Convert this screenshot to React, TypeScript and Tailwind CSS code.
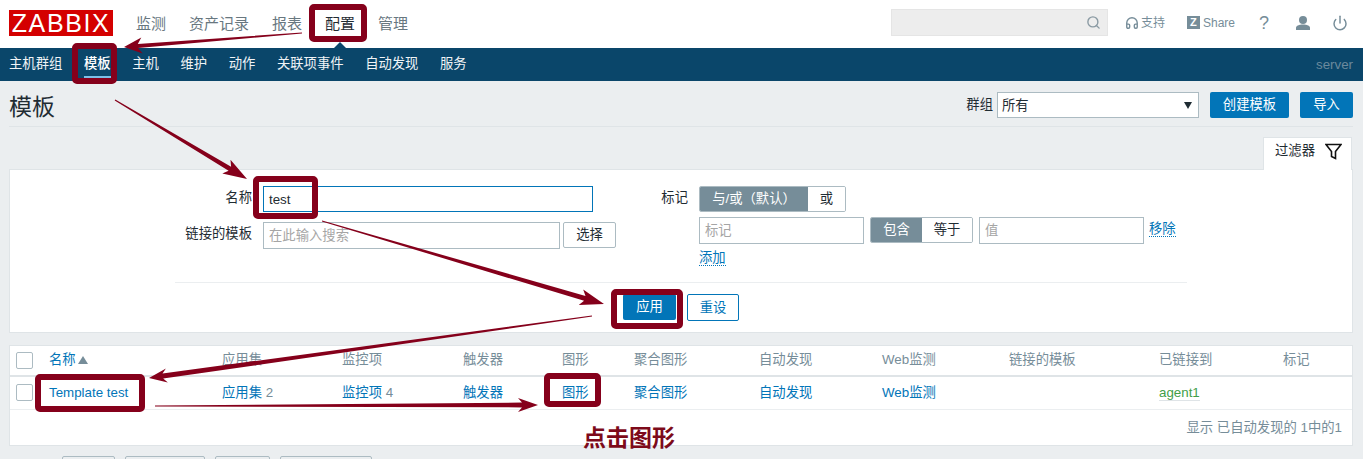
import { Search, Headphones, Power } from 'lucide-react'

const FONT = '[font-family:"Liberation_Sans","Noto_Sans_CJK_SC",sans-serif]'

const TOP_NAV = [
  { label: '监测', width: 'w-[30px]' },
  { label: '资产记录', width: 'w-[60px]' },
  { label: '报表', width: 'w-[30px]' },
  { label: '配置', width: 'w-[30px]', active: true },
  { label: '管理', width: 'w-[30px]' },
]

const SUB_NAV = ['主机群组', '模板', '主机', '维护', '动作', '关联项事件', '自动发现', '服务']

const COLUMNS = [
  { label: '应用集', width: 'w-[120px]' },
  { label: '监控项', width: 'w-[121px]' },
  { label: '触发器', width: 'w-[99px]' },
  { label: '图形', width: 'w-[72px]' },
  { label: '聚合图形', width: 'w-[125px]' },
  { label: '自动发现', width: 'w-[123px]' },
  { label: 'Web监测', width: 'w-[127px]' },
  { label: '链接的模板', width: 'w-[150px]' },
  { label: '已链接到', width: 'w-[124px]' },
  { label: '标记', width: '' },
]

const MARK = '#85001b'

// tapered arrow: thin at the tail, thick at the neck, notched head
function arrowPoints(x1: number, y1: number, x2: number, y2: number, head = 22, spread = 8, neck = 2.2) {
  const dx = x2 - x1
  const dy = y2 - y1
  const len = Math.hypot(dx, dy)
  const ux = dx / len
  const uy = dy / len
  const nx = -uy
  const ny = ux
  const at = (along: number, side: number) =>
    `${(x1 + ux * along + nx * side).toFixed(1)},${(y1 + uy * along + ny * side).toFixed(1)}`
  return [
    at(0, 0.5),
    at(len - head + 4, neck),
    at(len - head, spread),
    at(len, 0),
    at(len - head, -spread),
    at(len - head + 4, -neck),
    at(0, -0.5),
  ].join(' ')
}

function Annotations() {
  const boxes = [
    [309, 4, 58, 38],
    [72, 43, 45, 41],
    [253, 176, 65, 43],
    [611, 289, 72, 40],
    [35, 374, 110, 38],
    [544, 373, 57, 34],
  ]
  return (
    <svg className="absolute left-0 top-0 pointer-events-none" width="1363" height="459">
      {boxes.map(([x, y, w, h]) => (
        <rect key={`${x}-${y}`} x={x + 3} y={y + 3} width={w - 6} height={h - 6} rx="2" fill="none" stroke={MARK} strokeWidth="6" />
      ))}
      <polygon points={arrowPoints(302, 33, 124, 47, 18, 8, 2)} fill={MARK} />
      <polygon points={arrowPoints(115, 100, 247, 179, 24, 8, 2.4)} fill={MARK} />
      <polygon points={arrowPoints(322, 221, 604, 304, 24, 8, 2.6)} fill={MARK} />
      <polygon points={arrowPoints(592, 316, 149, 378, 18, 7, 2.6)} fill={MARK} />
      <polygon points={arrowPoints(155, 406, 538, 405, 20, 7, 2.4)} fill={MARK} />
    </svg>
  )
}

function TopBar() {
  return (
    <div className="h-12 bg-white flex items-center pl-[9px] pr-[15px]">
      <div className="w-[104px] h-[26px] mb-[2px] bg-[#d40000] text-white text-[25px] leading-[27px] text-center tracking-[1.6px]">ZABBIX</div>
      <nav className="flex gap-[23px] ml-[23px] text-[15px] text-[#68777f]">
        {TOP_NAV.map((item) => (
          <a key={item.label} className={`relative ${item.width} h-12 leading-[47px] ${item.active ? 'text-[#1f2c33]' : ''}`}>
            {item.label}
            {item.active && (
              <span className="absolute left-[9px] top-[42px] border-x-[6px] border-b-[6px] border-x-transparent border-b-[#0a466a]" />
            )}
          </a>
        ))}
      </nav>
      <div className="ml-auto flex items-center text-xs text-[#768d99]">
        <div className="relative w-[217px] h-[27px] mb-[3px] bg-[#ededed] border border-[#e5e5e5]">
          <Search className="absolute right-[6px] top-[5px] w-[15px] h-[15px] text-[#8a9aa3]" strokeWidth={2.2} />
        </div>
        <Headphones className="ml-[17px] w-[14px] h-[14px] mb-[3px]" strokeWidth={2.4} />
        <span className="ml-[2px] mb-[3px]">支持</span>
        <span className="ml-[22px] mb-[3px] w-[13px] h-[13px] bg-[#768d99] text-white text-[11px] leading-[13px] font-bold text-center">Z</span>
        <span className="ml-[3px] mb-[3px]">Share</span>
        <span className="ml-[23px] mb-[3px] w-[12px] text-center text-[18px] leading-5">?</span>
        <svg className="ml-[25px] mb-[3px]" width="16" height="16" viewBox="0 0 16 16" fill="#768d99">
          <circle cx="8" cy="5" r="4" />
          <path d="M1 15v-2c0-2.2 3-3.4 7-3.4s7 1.2 7 3.4v2z" />
        </svg>
        <Power className="ml-[21px] mb-[3px] w-[16px] h-[16px]" strokeWidth={2.2} />
      </div>
    </div>
  )
}

function SubNav() {
  return (
    <div className="h-[33px] bg-[#0a466a] flex items-center pl-[9px] pr-[10px] text-[13.33px] text-[#f0f4f7]">
      <nav className="flex gap-[21.6px]">
        {SUB_NAV.map((label) => (
          <a key={label} className={`relative h-[33px] leading-[32px] ${label === '模板' ? 'text-white font-medium' : ''}`}>
            {label}
            {label === '模板' && <span className="absolute left-0 right-0 bottom-[3px] h-[2px] bg-[#7cc0e8]" />}
          </a>
        ))}
      </nav>
      <span className="ml-auto text-[#6b8a9d]">server</span>
    </div>
  )
}

function PageHeader() {
  return (
    <div className="mx-[10px] ml-[9px] h-[46px] border-b border-[#dfe4e7] flex items-start justify-between">
      <h1 className="text-[23px] leading-[26px] mt-[13px] text-[#1f2c33]">模板</h1>
      <div className="flex items-center mt-[11px] text-[13.33px] text-[#1f2c33]">
        <span className="mr-1">群组</span>
        <div className="relative w-[202px] h-[26px] bg-white border border-[#acbbc2] pl-1 leading-[26px]">
          所有
          <span className="absolute right-[6px] top-[9px] border-x-[4px] border-t-[7px] border-x-transparent border-t-[#1f2c33]" />
        </div>
        <button className="ml-[11px] w-[79px] h-[26px] rounded-[2px] bg-[#0275b8] text-white">创建模板</button>
        <button className="ml-[11px] w-[53px] h-[26px] rounded-[2px] bg-[#0275b8] text-white">导入</button>
      </div>
    </div>
  )
}

function Segment({ on, off, onWidth, offWidth }: { on: string; off: string; onWidth: string; offWidth: string }) {
  return (
    <div className="flex w-fit h-[26px] rounded-[2px] border border-[#acbbc2] overflow-hidden leading-[24px] text-center">
      <span className={`${onWidth} bg-[#768d99] text-white`}>{on}</span>
      <span className={`${offWidth} bg-white text-[#1f2c33]`}>{off}</span>
    </div>
  )
}

function TextBox({ width, placeholder }: { width: string; placeholder: string }) {
  return (
    <div className={`${width} h-[27px] border border-[#acbbc2] bg-white pl-[5px] leading-[25px] text-[#a5a5a5]`}>{placeholder}</div>
  )
}

function FilterPanel() {
  return (
    <div className="mx-[10px] ml-[9px] mt-[10px]">
      <div className="flex justify-end pr-px">
        <div className="w-[89px] h-[33px] pb-[6px] bg-white border border-b-0 border-[#dfe4e7] flex items-center text-[13.33px] text-[#1f2c33]">
          <span className="ml-[11px]">过滤器</span>
          <svg className="ml-[10px]" width="17" height="17" viewBox="0 0 17 17" fill="none" stroke="#111" strokeWidth="1.6">
            <path d="M1 1.5h15L10.5 8.5v7l-4-2v-5z" />
          </svg>
        </div>
      </div>
      <div className="h-[164px] bg-white border border-[#dfe4e7] -mt-px text-[13.33px] text-[#1f2c33]">
        <div className="flex pt-4 h-[112px] pl-[165px]">
          <div className="w-[451px]">
            <div className="flex items-start">
              <span className="w-[77px] text-right leading-[24px]">名称</span>
              <div className="ml-[11px] w-[330px] h-[26px] border border-[#0275b8] pl-[5px] leading-[25px]">test</div>
            </div>
            <div className="flex items-start mt-[10px]">
              <span className="w-[77px] text-right leading-[24px] whitespace-nowrap">链接的模板</span>
              <div className="ml-[11px]"><TextBox width="w-[297px]" placeholder="在此输入搜索" /></div>
              <button className="ml-[3px] w-[53px] h-[26px] bg-white border border-[#acbbc2] rounded-[2px]">选择</button>
            </div>
          </div>
          <div className="ml-[24px]">
            <div className="flex items-start">
              <span className="w-[38px] text-right leading-[24px]">标记</span>
              <div className="ml-[11px]">
                <Segment on="与/或（默认）" off="或" onWidth="w-[108px]" offWidth="w-[37px]" />
                <div className="flex items-start mt-[5px]">
                  <TextBox width="w-[165px]" placeholder="标记" />
                  <div className="ml-[6px]"><Segment on="包含" off="等于" onWidth="w-[51px]" offWidth="w-[50px]" /></div>
                  <div className="ml-[6px]"><TextBox width="w-[165px]" placeholder="值" /></div>
                  <a className="ml-[5px] mt-[4px] leading-[15px] text-[#0275b8] border-b border-dotted border-[#0275b8]">移除</a>
                </div>
                <a className="inline-block mt-[6px] leading-[15px] text-[#0275b8] border-b border-dotted border-[#0275b8]">添加</a>
              </div>
            </div>
          </div>
        </div>
        <div className="mx-auto w-[1012px] border-t border-[#ebeef0]" />
        <div className="flex justify-center gap-[11px] mt-[11px]">
          <button className="w-[53px] h-[26px] rounded-[2px] bg-[#0275b8] text-white">应用</button>
          <button className="w-[52px] h-[27px] rounded-[2px] bg-white border border-[#0275b8] text-[#0275b8]">重设</button>
        </div>
      </div>
    </div>
  )
}

function Checkbox() {
  return <span className="block ml-[6px] w-[17px] h-[17px] rounded-[2px] border border-[#acbbc2] bg-white" />
}

function TemplateTable() {
  const link = 'text-[#0275b8]'
  return (
    <div className="mx-[10px] ml-[9px] mt-3 h-[101px] bg-white border border-[#dfe4e7] text-[13.33px]">
      <table className="w-full table-fixed text-left">
        <thead>
          <tr className="h-[30px] border-b-2 border-[#dfe4e7] text-[#768d99]">
            <th className="w-[39px] font-normal"><Checkbox /></th>
            <th className={`w-[173px] pb-[2px] font-normal ${link}`}>
              名称
              <span className="inline-block ml-[2px] border-x-[5px] border-b-[8px] border-x-transparent border-b-[#768d99]" />
            </th>
            {COLUMNS.map((col) => (
              <th key={col.label} className={`${col.width} pb-[2px] font-normal`}>{col.label}</th>
            ))}
          </tr>
        </thead>
        <tbody>
          <tr className="h-[33px] border-b border-[#ebeef0] text-[#768d99]">
            <td><Checkbox /></td>
            <td className={link}>Template test</td>
            <td><a className={link}>应用集</a> 2</td>
            <td><a className={link}>监控项</a> 4</td>
            <td className={link}>触发器</td>
            <td className={link}>图形</td>
            <td className={link}>聚合图形</td>
            <td className={link}>自动发现</td>
            <td className={link}>Web监测</td>
            <td />
            <td><a className="text-[#429e47] border-b border-[#dfe4e7]">agent1</a></td>
            <td />
          </tr>
        </tbody>
      </table>
      <div className="pr-[10px] pt-2 text-right text-[#768d99]">显示 已自动发现的 1中的1</div>
    </div>
  )
}

function BottomButtons() {
  return (
    <div className="flex mt-[10px] ml-[62px] gap-[10px]">
      {['w-[53px]', 'w-[80px]', 'w-[55px]', 'w-[92px]'].map((w) => (
        <span key={w} className={`${w} h-[26px] bg-[#ebeef0] border border-[#acbbc2] rounded-[2px]`} />
      ))}
    </div>
  )
}

export default function App() {
  return (
    <div className={`relative h-[459px] overflow-hidden bg-[#ebeef0] ${FONT}`}>
      <TopBar />
      <SubNav />
      <PageHeader />
      <FilterPanel />
      <TemplateTable />
      <BottomButtons />
      <Annotations />
      <span className="absolute left-[583px] top-[423px] text-[23px] leading-[30px] font-bold text-[#7d0a1a]">点击图形</span>
    </div>
  )
}
